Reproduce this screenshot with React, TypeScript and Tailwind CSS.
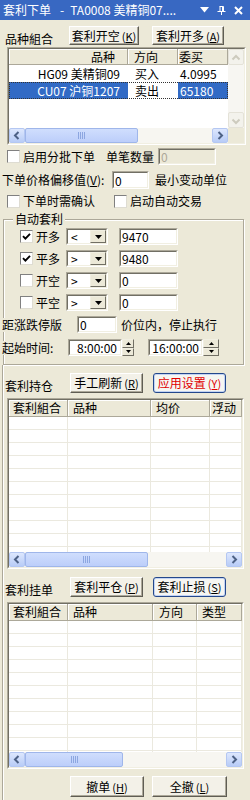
import React from "react";

type C = { children?: React.ReactNode; className?: string };

function Sunken({ children, className = "", inner = "bg-white" }: C & { inner?: string }) {
  return (
    <div className={"shrink-0 border border-t-[#aca899] border-l-[#aca899] border-r-white border-b-white " + className}>
      <div className={"w-full h-full border border-t-[#716f64] border-l-[#716f64] border-r-[#f1efe2] border-b-[#f1efe2] overflow-hidden " + inner}>
        {children}
      </div>
    </div>
  );
}

function Btn({ children, className = "", focus = false }: C & { focus?: boolean }) {
  if (focus)
    return (
      <div className={"h-full shrink-0 flex items-center justify-center rounded-[3px] border border-[#24488c] bg-[#f6f6f2] shadow-[inset_0_0_0_1px_#c2d3f3] whitespace-nowrap " + className}>
        {children}
      </div>
    );
  return (
    <div className={"h-full shrink-0 flex items-center justify-center border border-t-white border-l-white border-r-[#5f5d54] border-b-[#5f5d54] bg-[#f3f1e8] shadow-[inset_-1px_-1px_0_#aca899] whitespace-nowrap " + className}>
      {children}
    </div>
  );
}

function Check({ on = false }: { on?: boolean }) {
  return (
    <div className="w-[13px] h-[13px] shrink-0 bg-white border border-t-[#808080] border-l-[#808080] border-r-[#dedcd2] border-b-[#dedcd2] flex items-center justify-center">
      {on && (
        <svg width="9" height="9" viewBox="0 0 9 9">
          <path d="M1 4.2 L3.4 6.6 L8 1.8" fill="none" stroke="#000" strokeWidth="1.9" />
        </svg>
      )}
    </div>
  );
}

function Arrow({ dir, disabled = false }: { dir: "l" | "r" | "u" | "d"; disabled?: boolean }) {
  const d =
    dir === "l"
      ? "M8.5 3 L5 6.5 L8.5 10"
      : dir === "r"
      ? "M5.5 3 L9 6.5 L5.5 10"
      : dir === "u"
      ? "M3.5 8.5 L7 5 L10.5 8.5"
      : "M3.5 5.5 L7 9 L10.5 5.5";
  return (
    <div
      className={
        disabled
          ? "w-[16px] h-[16px] shrink-0 rounded-[2px] border border-[#e4e2d8] bg-[#f3f2ec] flex items-center justify-center"
          : "w-[16px] h-full shrink-0 rounded-[2px] border border-[#b4c7f2] bg-linear-to-b from-[#dde7fd] to-[#b8ccf7] flex items-center justify-center"
      }
    >
      <svg width="14" height="13" viewBox="0 0 14 13">
        <path d={d} fill="none" stroke={disabled ? "#cdcbbe" : "#4d6185"} strokeWidth="2" />
      </svg>
    </div>
  );
}

function Grip() {
  return (
    <div className="flex gap-[1px]">
      {[0, 1, 2, 3].map((i) => (
        <div key={i} className="w-[1px] h-[7px] bg-[#8ca6e0]" />
      ))}
    </div>
  );
}

function HScroll({ thumb }: { thumb: string }) {
  return (
    <div className="h-[15px] shrink-0 flex bg-[#f7f6f1]">
      <Arrow dir="l" />
      <div className="flex-1 flex">
        <div className={"h-full rounded-[2px] border border-[#9fb6ea] bg-linear-to-b from-[#d0defd] to-[#bccefa] flex items-center justify-center " + thumb}>
          <Grip />
        </div>
      </div>
      <Arrow dir="r" />
    </div>
  );
}

function DropBtn() {
  return (
    <div className="w-[16px] h-full shrink-0 bg-[#ece9d8] border border-t-[#f1efe2] border-l-[#f1efe2] border-r-[#716f64] border-b-[#716f64] flex items-center justify-center">
      <svg width="7" height="4" viewBox="0 0 7 4">
        <path d="M0 0 H7 L3.5 4 Z" fill="#000" />
      </svg>
    </div>
  );
}

function Spin({ w }: { w: string }) {
  const b = "flex-1 bg-[#ece9d8] border border-t-[#f1efe2] border-l-[#f1efe2] border-r-[#716f64] border-b-[#716f64] flex items-center justify-center";
  return (
    <div className={"h-full shrink-0 flex flex-col " + w}>
      <div className={b}>
        <svg width="5" height="3" viewBox="0 0 5 3">
          <path d="M0 3 H5 L2.5 0 Z" fill="#000" />
        </svg>
      </div>
      <div className={b}>
        <svg width="5" height="3" viewBox="0 0 5 3">
          <path d="M0 0 H5 L2.5 3 Z" fill="#000" />
        </svg>
      </div>
    </div>
  );
}

function Select({ v }: { v: string }) {
  return (
    <Sunken className="w-[42px] h-[17px]">
      <div className="flex h-full">
        <span className="flex-1 pl-[3px] text-[12px] leading-[12px] flex items-center">{v}</span>
        <DropBtn />
      </div>
    </Sunken>
  );
}

function Field({ v, className = "" }: { v: string; className?: string }) {
  return (
    <Sunken className={"h-[17px] " + className}>
      <div className="h-full flex items-center pl-[1px] leading-[13px]">{v}</div>
    </Sunken>
  );
}

const headCell =
  "h-full shrink-0 bg-[#ece9d8] border-r border-b border-r-[#aca899] border-b-[#aca899] shadow-[inset_1px_1px_0_#fff] flex items-center whitespace-nowrap overflow-hidden";

function GridRows({ cols, n }: { cols: string[]; n: number }) {
  return (
    <div className="flex-1 bg-white overflow-hidden">
      {Array.from({ length: n }).map((_, i) => (
        <div key={i} className="h-[13px] flex border-b border-b-[#ebe9df]">
          {cols.map((c, j) => (
            <div key={j} className={"h-full border-r border-r-[#ebe9df] " + c} />
          ))}
        </div>
      ))}
    </div>
  );
}

function Mn({ k }: { k: string }) {
  return (
    <span className="ml-[2px] text-[11px]">
      (<span className="underline">{k}</span>)
    </span>
  );
}

function AutoRow({ on, label, op, val, first = false }: { on: boolean; label: string; op: string; val: string; first?: boolean }) {
  return (
    <div className={"h-[17px] flex items-center " + (first ? "" : "mt-[5px]")}>
      <div className="ml-[16px]">
        <Check on={on} />
      </div>
      <span className="ml-[3px] w-[30px]">{label}</span>
      <Select v={op} />
      <Field v={val} className="ml-[11px] w-[59px]" />
    </div>
  );
}

export default function App() {
  return (
    <div className="w-[250px] h-[800px] overflow-hidden bg-[#ece9d8] font-['Noto_Sans_CJK_SC',sans-serif] text-[12px] leading-[14px] text-black select-none">
      {/* Title bar */}
      <div className="h-[20px] bg-[#3868c2] flex items-center text-white pl-[3px] pr-[7px]">
        <span className="whitespace-nowrap">套利下单</span>
        <span className="ml-[9px]">-</span>
        <span className="ml-[6px] whitespace-nowrap">TA0008 美精铜07....</span>
        <div className="ml-auto flex items-center">
          <svg width="9" height="6" viewBox="0 0 9 6">
            <path d="M0 0 H9 L4.5 5.5 Z" fill="#fff" />
          </svg>
          <svg className="ml-[8px]" width="9" height="9" viewBox="0 0 9 9">
            <path d="M2.5 0.5 H6.5 V5.5 M3 0.5 V5.5 M5.5 0.5 V5.5 M0.5 5.5 H8.5 M4.5 5.5 V9" fill="none" stroke="#fff" strokeWidth="1" />
          </svg>
          <svg className="ml-[8px]" width="9" height="9" viewBox="0 0 9 9">
            <path d="M1 1 L8 8 M8 1 L1 8" stroke="#fff" strokeWidth="2" />
          </svg>
        </div>
      </div>

      {/* Row 1 */}
      <div className="mt-[6px] h-[19px] flex items-center">
        <span className="ml-[5px] w-[64px] mt-[6px]">品种組合</span>
        <Btn className="w-[70px]">
          套利开空<Mn k="K" />
        </Btn>
        <Btn className="ml-[13px] w-[72px]">
          套利开多<Mn k="A" />
        </Btn>
      </div>

      {/* List 1 */}
      <Sunken className="ml-[7px] mt-[2px] w-[239px] h-[98px]">
        <div className="flex h-full">
          <div className="w-[219px] flex flex-col bg-white">
            <div className="h-[16px] flex shrink-0">
              <div className={headCell + " w-[119px] justify-end pr-[12px]"}>品种</div>
              <div className={headCell + " w-[50px] pl-[6px]"}>方向</div>
              <div className={headCell + " w-[50px] pl-[1px]"}>委买</div>
            </div>
            <div className="h-[17px] flex shrink-0 items-center">
              <div className="w-[119px] text-right pr-[8px] whitespace-nowrap">HG09 美精铜09</div>
              <div className="w-[50px] pl-[7px]">买入</div>
              <div className="w-[50px] pl-[2px]">4.0995</div>
            </div>
            <div className="h-[17px] flex shrink-0 outline outline-1 outline-dotted outline-[#333] -outline-offset-1">
              <div className="w-[119px] bg-[#316ac5] text-white text-right pr-[8px] flex items-center justify-end whitespace-nowrap">CU07 沪铜1207</div>
              <div className="w-[50px] pl-[7px] flex items-center">卖出</div>
              <div className="w-[50px] pl-[2px] bg-[#316ac5] text-white flex items-center">65180</div>
            </div>
            <div className="flex-1" />
            <HScroll thumb="w-[113px]" />
          </div>
          <div className="w-[16px] flex flex-col">
            <div className="flex-1 flex flex-col bg-[#f7f6f2]">
              <Arrow dir="u" disabled />
              <div className="flex-1" />
              <Arrow dir="d" disabled />
            </div>
            <div className="h-[15px] bg-[#ece9d8]" />
          </div>
        </div>
      </Sunken>

      {/* Row 2 */}
      <div className="mt-[3px] h-[17px] flex items-center">
        <div className="ml-[7px]">
          <Check />
        </div>
        <span className="ml-[3px] w-[72px]">启用分批下单</span>
        <span className="ml-[11px] w-[48px]">单笔数量</span>
        <Sunken className="ml-[4px] w-[58px] h-[17px]" inner="bg-[#ece9d8]">
          <div className="h-full flex items-center pl-[1px] leading-[13px] text-[#aca899]">0</div>
        </Sunken>
      </div>

      {/* Row 3 */}
      <div className="mt-[6px] h-[18px] flex items-center">
        <span className="ml-[2px] w-[110px] whitespace-nowrap">
          下单价格偏移值(<span className="underline">V</span>):
        </span>
        <Sunken className="w-[37px] h-[18px]">
          <div className="h-full flex items-center pl-[1px] leading-[13px]">0</div>
        </Sunken>
        <span className="ml-[6px]">最小变动单位</span>
      </div>

      {/* Row 4 */}
      <div className="mt-[5px] h-[14px] flex items-center">
        <div className="ml-[7px]">
          <Check />
        </div>
        <span className="ml-[3px] w-[72px]">下单时需确认</span>
        <div className="ml-[19px]">
          <Check />
        </div>
        <span className="ml-[3px]">启动自动交易</span>
      </div>

      {/* Group box */}
      <div className="relative ml-[3px] mt-[11px] w-[241px] h-[146px] border border-[#aca899] shadow-[inset_1px_1px_0_#fff,1px_1px_0_#fff] pt-[8px]">
        <span className="absolute -top-[8px] left-[9px] px-[2px] bg-[#ece9d8]">自动套利</span>
        <AutoRow first on label="开多" op="<" val="9470" />
        <AutoRow on label="平多" op=">" val="9480" />
        <AutoRow on={false} label="开空" op=">" val="0" />
        <AutoRow on={false} label="平空" op=">" val="0" />
        <div className="mt-[5px] h-[17px] flex items-center">
          <span className="-ml-[2px] w-[75px] bg-[#ece9d8]">距涨跌停版</span>
          <Field v="0" className="w-[40px]" />
          <span className="ml-[4px] whitespace-nowrap">价位内，停止执行</span>
        </div>
        <div className="mt-[6px] h-[17px] flex items-center">
          <span className="-ml-[2px] w-[66px] bg-[#ece9d8]">起始时间:</span>
          <Sunken className="w-[54px] h-[17px]">
            <div className="h-full flex items-center justify-end pr-[3px] leading-[13px] whitespace-nowrap">8:00:00</div>
          </Sunken>
          <Spin w="w-[12px]" />
          <Sunken className="ml-[14px] w-[55px] h-[17px]">
            <div className="h-full flex items-center justify-end pr-[2px] leading-[13px] whitespace-nowrap">16:00:00</div>
          </Sunken>
          <Spin w="w-[16px]" />
        </div>
      </div>

      {/* Lower part */}
      <div className="ml-[2px] border-l border-l-[#aca899] shadow-[inset_1px_0_0_#fff] h-[436px] flex flex-col">
        <div className="mt-[8px] h-[20px] flex items-end">
          <span className="ml-[2px] w-[65px]">套利持仓</span>
          <Btn className="w-[73px]">
            手工刷新<Mn k="R" />
          </Btn>
          <Btn focus className="ml-[10px] w-[73px] text-[#e00000]">
            应用设置<Mn k="Y" />
          </Btn>
        </div>

        <Sunken className="ml-[4px] mt-[5px] w-[237px] h-[171px]">
          <div className="h-full flex flex-col bg-white">
            <div className="h-[17px] flex shrink-0">
              <div className={headCell + " w-[59px] pl-[4px]"}>套利組合</div>
              <div className={headCell + " w-[83px] pl-[5px]"}>品种</div>
              <div className={headCell + " w-[59px] pl-[5px]"}>均价</div>
              <div className={headCell + " flex-1 pl-[2px]"}>浮动</div>
            </div>
            <GridRows cols={["w-[59px]", "w-[83px]", "w-[59px]", "flex-1"]} n={11} />
            <HScroll thumb="w-[123px]" />
          </div>
        </Sunken>

        <div className="mt-[8px] h-[20px] flex items-end">
          <span className="ml-[2px] w-[65px]">套利挂单</span>
          <Btn className="w-[73px]">
            套利平仓<Mn k="P" />
          </Btn>
          <Btn focus className="ml-[10px] w-[73px]">
            套利止损<Mn k="S" />
          </Btn>
        </div>

        <Sunken className="ml-[4px] mt-[5px] w-[237px] h-[167px]">
          <div className="h-full flex flex-col bg-white">
            <div className="h-[17px] flex shrink-0">
              <div className={headCell + " w-[59px] pl-[4px]"}>套利組合</div>
              <div className={headCell + " w-[85px] pl-[5px]"}>品种</div>
              <div className={headCell + " w-[44px] pl-[6px]"}>方向</div>
              <div className={headCell + " flex-1 pl-[5px]"}>类型</div>
            </div>
            <GridRows cols={["w-[59px]", "w-[85px]", "w-[44px]", "flex-1"]} n={11} />
            <HScroll thumb="w-[98px]" />
          </div>
        </Sunken>

        <div className="mt-[7px] h-[21px] flex">
          <Btn className="ml-[67px] w-[74px]">
            撤单<Mn k="H" />
          </Btn>
          <Btn className="ml-[8px] w-[75px]">
            全撤<Mn k="L" />
          </Btn>
        </div>
      </div>
    </div>
  );
}
